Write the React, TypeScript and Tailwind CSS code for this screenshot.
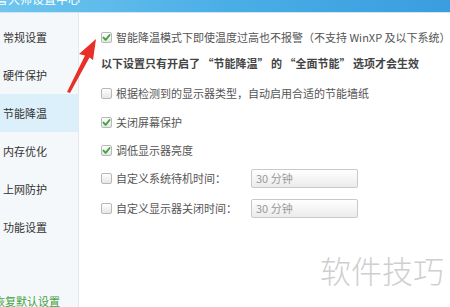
import React from "react";

const font = { fontFamily: '"Noto Sans CJK SC", "Noto Sans", sans-serif' };

function Box({ checked }: { checked?: boolean }) {
  return (
    <div className="w-[11px] h-[11px] shrink-0 rounded-[2px] border border-[#b8b8b8] bg-gradient-to-b from-white to-[#e6e6e6] flex items-center justify-center">
      {checked && (
        <svg width="9" height="9" viewBox="0 0 9 9">
          <path d="M1.5 4.6 L3.6 6.8 L7.6 2" fill="none" stroke="#3da53a" strokeWidth="1.9" strokeLinecap="round" strokeLinejoin="round" />
        </svg>
      )}
    </div>
  );
}

function Row({ checked, children, className = "" }: { checked?: boolean; children: React.ReactNode; className?: string }) {
  return (
    <div className={`h-[26px] flex items-center gap-[4px] ${className}`}>
      <Box checked={checked} />
      {children}
    </div>
  );
}

function Select() {
  return (
    <div className="w-[107px] h-[19px] border border-[#c9c9c9] rounded-[2px] bg-gradient-to-b from-white to-[#ebebeb] flex items-center pl-[4px] text-[11px] text-[#9a9a9a]">
      30 分钟
    </div>
  );
}

const navItems = ["常规设置", "硬件保护", "节能降温", "内存优化", "上网防护", "功能设置"];

export default function App() {
  return (
    <div className="relative w-[450px] h-[307px] overflow-hidden bg-white flex flex-col" style={font}>
      <div className="h-[12px] shrink-0 overflow-hidden bg-gradient-to-r from-[#6fc6ef] via-[#4aaee6] to-[#3a9ddf] text-white text-[12px] leading-none">
        <div className="mt-[-7px] -ml-[4px]">鲁大师设置中心</div>
      </div>
      <div className="h-[1px] shrink-0 bg-[#cfe6f4]" />
      <div className="flex flex-1 min-h-0">
        <div className="w-[79px] shrink-0 bg-[#f5f8fa] border-r border-[#e2e8ec] flex flex-col pt-[5px]">
          {navItems.map((t, i) => (
            <div
              key={t}
              className={`h-[38px] flex items-center pl-[3px] text-[11px] text-[#333] ${i === 2 ? "bg-[#dcf0fb]" : ""}`}
            >
              {t}
            </div>
          ))}
          <div className="flex-1" />
          <div className="h-[20px] flex items-center -ml-[6px] text-[11px] text-[#45a03f] whitespace-nowrap mb-[-4px]">
            恢复默认设置
          </div>
        </div>
        <div className="flex-1 flex flex-col pl-[22px] pt-[11px] text-[11px] text-[#555] whitespace-nowrap">
          <Row checked>
            <span>智能降温模式下即使温度过高也不报警（不支持 WinXP 及以下系统）</span>
          </Row>
          <div className="h-[26px] flex items-center font-bold text-[#444]">
            以下设置只有开启了 “节能降温” 的 “全面节能” 选项才会生效
          </div>
          <Row className="mt-[4px]">
            <span>根据检测到的显示器类型，自动启用合适的节能墙纸</span>
          </Row>
          <Row checked className="mt-[3px]">
            <span>关闭屏幕保护</span>
          </Row>
          <Row checked className="mt-[2px]">
            <span>调低显示器亮度</span>
          </Row>
          <Row className="mt-[2px]">
            <span className="w-[131px]">自定义系统待机时间：</span>
            <Select />
          </Row>
          <Row className="mt-[4px]">
            <span className="w-[131px]">自定义显示器关闭时间：</span>
            <Select />
          </Row>
        </div>
      </div>

      <svg className="absolute left-0 top-0 pointer-events-none" width="450" height="307">
        <polygon
          points="96,39 79,54 85,55.5 67,92 70,93 89.5,57.5 93,60"
          fill="#e8302a"
        />
      </svg>

      <div className="absolute left-[320px] top-[254px] text-[31px] leading-none text-[#cfcfcf] font-light">
        软件技巧
      </div>
    </div>
  );
}
